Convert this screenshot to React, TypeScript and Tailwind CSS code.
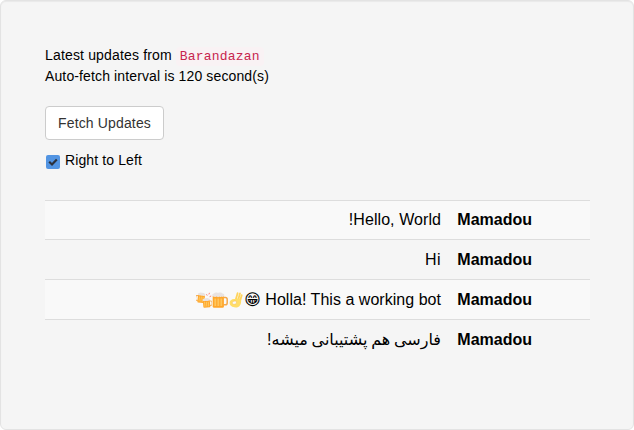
import { useState } from "react";
import type { ReactNode } from "react";

function OkHand() {
  return (
    <svg viewBox="0 0 16 16" className="inline-block size-4 align-[-3px]" role="img" aria-label="👌">
      <path d="M7.8 7.5 9.6 1.2M10.3 7.5 12 1.3M12.2 8.5 13.7 3.2" fill="none" stroke="#ffd45c" strokeWidth="1.8" strokeLinecap="round" />
      <path d="M7 7c2.5-1 5.5-.6 6.1 1.4.3 4-1.7 7.1-5.4 7.1-3.6 0-6.1-2-6.1-4.7C1.6 8.4 4 6.5 7 7Z" fill="#ffdd67" />
      <path d="M8.2 9.2c-1.8-.6-3.7.2-4 1.5-.2 1.5 2 2.1 3.4 1.2 1-.6 1.1-1.7.6-2.7Z" fill="#f9f9f9" stroke="#f2b84d" strokeWidth=".5" />
    </svg>
  );
}

function MugShape() {
  return (
    <>
      <path d="M11.4 5.6h2c1.2 0 1.8.6 1.8 1.8v3.6c0 1.2-.6 1.8-1.8 1.8h-2" fill="none" stroke="#f5a94c" strokeWidth="1.5" />
      <path d="M.7 4h11.2v10.4q0 1.4-1.4 1.4H2.1q-1.4 0-1.4-1.4Z" fill="#ffa62b" />
      <path d="M2.4 6.5h1.8v7.6H2.4zm3 0h1.8v7.6H5.4zm3 0h1.8v7.6H8.4z" fill="#ffc65c" />
      <path d="M.8 4.3C-.2 3 .4 1.5 2 1.4 2.8.3 5 .2 6 .9 7.6 0 9.8.4 10.4 1.4c1.7.1 2.6 1.5 1.5 2.9-.8.8-1.6.7-2.2.2-.7.8-1.8.8-2.4.1-.8.8-1.8.7-2.4 0-.9.7-3.1.6-4.1-.3Z" fill="#e9e3e1" />
    </>
  );
}

function Beer() {
  return (
    <svg viewBox="0 0 16 16" className="inline-block size-4 align-[-3px]" role="img" aria-label="🍺">
      <MugShape />
    </svg>
  );
}

function Cheers() {
  return (
    <svg viewBox="0 0 16 16" className="inline-block size-4 align-[-3px]" role="img" aria-label="🍻">
      <g transform="translate(9.7 .8) rotate(6) scale(-.62 .66)"><MugShape /></g>
      <g transform="translate(6.2 6.3) rotate(-5) scale(.62 .61)"><MugShape /></g>
      <path d="m11.2 3.6-.7-1.4M12.9 2.4l.6-1.6M13.6 4.7l1.6-.7" stroke="#ff6254" strokeWidth=".8" />
    </svg>
  );
}

const messages: { user: string; text: ReactNode; style: string }[] = [
  { user: "Mamadou", text: "Hello, World!", style: "tracking-[0.07px]" },
  { user: "Mamadou", text: "Hi", style: "tracking-[0.4px]" },
  {
    user: "Mamadou",
    text: (
      <>
        Holla! This a working bot 😁<OkHand /><Beer /><Cheers />
      </>
    ),
    style: "tracking-[0.03px]",
  },
  { user: "Mamadou", text: "فارسی هم پشتیبانی میشه!", style: "[word-spacing:-0.7px]" },
];

export default function App() {
  const [rtl, setRtl] = useState(true);
  return (
    <main className="h-[430px] w-[634px] rounded-md border border-[#e3e3e3] bg-[#f5f5f5] px-11 pt-11 font-['Liberation_Sans','DejaVu_Sans',sans-serif] text-black shadow-[inset_0_1px_1px_rgba(0,0,0,0.05)]">
      <p className="text-sm leading-5 tracking-[0.125px]">
        <span className="block h-[21px] leading-[21px]">
          <span className="tracking-[0.16px]">Latest updates from </span>
          <code className="rounded bg-[#f9f2f4] px-1 py-0.5 font-['Liberation_Mono',monospace] text-[13px] tracking-[0.2px] text-[#c7254e]">Barandazan</code>
        </span>
        Auto-fetch interval is 120 second(s)
      </p>
      <button className="mt-5 block h-[34px] w-[119px] rounded border border-[#cccccc] bg-white text-sm leading-5 tracking-[0.15px] text-[#333333]">
        Fetch Updates
      </button>
      <label className="mt-2.5 flex h-5 items-center gap-[5px] pl-px text-sm leading-5 tracking-[0.12px]">
        <input type="checkbox" className="sr-only" checked={rtl} onChange={() => setRtl(!rtl)} />
        <span className="mt-[3px] flex size-3.5 items-center justify-center rounded-xs bg-[#5294e2]">
          {rtl && (
            <svg viewBox="0 0 14 14" className="size-3.5" fill="none" stroke="#2b303b" strokeWidth="2.2">
              <path d="M3.2 6.8 6 9.5 10.8 4.5" />
            </svg>
          )}
        </span>
        Right to Left
      </label>
      <table dir={rtl ? "rtl" : "ltr"} className="mt-[30px] w-[545px] table-fixed border-collapse text-base leading-[23px]">
        <tbody>
          {messages.map((m, i) => (
            <tr key={i} className="h-10 border-t border-[#dddddd] odd:bg-[#f9f9f9] first:h-[39px] first:[&>td]:pb-0.5">
              <td className="w-[50px]" />
              <td className="w-[91px] px-2 py-0 font-bold">{m.user}</td>
              <td className="px-2 py-0 whitespace-nowrap"><span className={m.style}>{m.text}</span></td>
            </tr>
          ))}
        </tbody>
      </table>
    </main>
  );
}
